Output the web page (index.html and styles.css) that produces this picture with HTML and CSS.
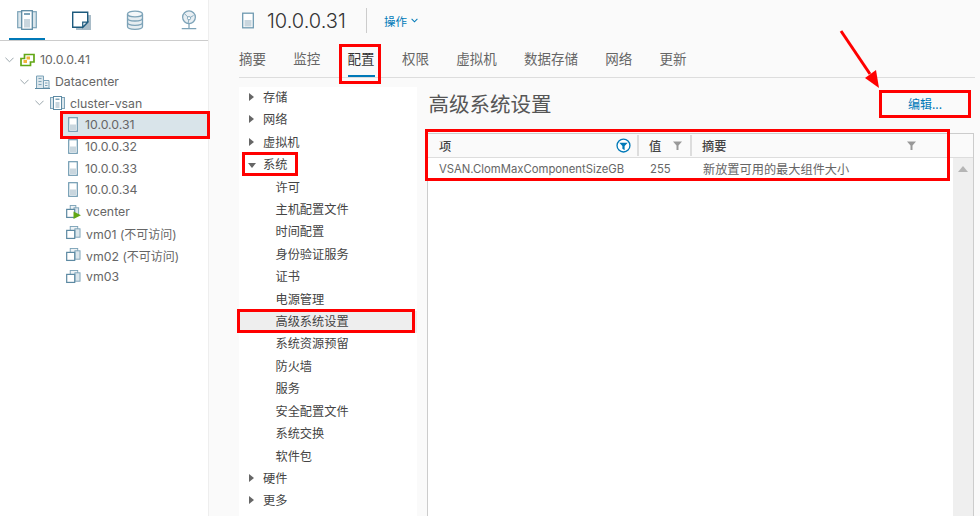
FILE: index.html
```html
<!DOCTYPE html>
<html lang="zh">
<head>
<meta charset="utf-8">
<title>高级系统设置</title>
<link rel="stylesheet" href="styles.css">
</head>
<body>
<div class="app">
  <aside class="sidebar">
    <nav class="side-tabs">
      <div class="side-tab active">
        <svg viewBox="0 0 20 20"><rect x=".7" y="1.700" width="5" height="16" fill="#dbe6ec" stroke="#7da3b8" stroke-width="1.200"/><rect x="14.300" y="1.700" width="5" height="16" fill="#dbe6ec" stroke="#7da3b8" stroke-width="1.200"/><rect x="4.700" y=".7" width="10.600" height="18.600" fill="#fff" stroke="#5d8aa3" stroke-width="1.300"/><rect x="7" y="3" width="6" height="2" fill="#7da3b8"/><rect x="7" y="9" width="6" height="8.500" fill="#c9d6de"/></svg>
      </div>
      <div class="side-tab">
        <svg viewBox="0 0 20 20"><path d="M5 5h15v15H5z" fill="#a9bcc8"/><path d="M1.700 2.200h15v10l-5 5h-10z" fill="#fff" stroke="#1d5a7d" stroke-width="1.400"/><path d="M16.700 12.200h-5v5z" fill="#dfe8ee" stroke="#1d5a7d" stroke-width="1.200"/></svg>
      </div>
      <div class="side-tab">
        <svg viewBox="0 0 20 20"><g fill="#e6edf1" stroke="#7da3b8" stroke-width="1.300"><path d="M2.500 4v12.500c0 1.600 3.400 2.800 7.500 2.800s7.500-1.200 7.500-2.800V4"/><ellipse cx="10" cy="4" rx="7.500" ry="2.900" fill="#f4f7f9"/><path d="M2.500 8.200c0 1.600 3.400 2.800 7.500 2.800s7.500-1.200 7.500-2.800M2.500 12.500c0 1.600 3.400 2.800 7.500 2.800s7.500-1.200 7.500-2.800" fill="none"/></g></svg>
      </div>
      <div class="side-tab">
        <svg viewBox="0 0 20 22"><circle cx="10" cy="8" r="7" fill="#e9eff3" stroke="#7da3b8" stroke-width="1.400"/><path d="M5 4l5 5 5-3M10 9l-1 6" fill="none" stroke="#7da3b8"/><circle cx="10" cy="9" r="1.800" fill="#fff" stroke="#7da3b8"/><path d="M10 15v5M2 20.500h16" stroke="#7da3b8" stroke-width="1.400"/></svg>
      </div>
    </nav>
    <ul class="tree">
      <li class="tree-row lvl0"><svg class="chev" viewBox="0 0 10 6"><path d="M.5.500l4.500 4.500L9.500.500" fill="none" stroke="#9aa5ab" stroke-width="1.100"/></svg>
        <svg class="ico" viewBox="0 0 15 13"><path d="M1 5h3.500V1H14v7.500h-3.500V12H1z" fill="#fff" stroke="#62a716" stroke-width="1.700"/><rect x="6.500" y="3" width="3.500" height="3" fill="#f2b33d"/><rect x="3.500" y="6.500" width="3.500" height="3" fill="#f2b33d"/></svg>
        <span>10.0.0.41</span></li>
      <li class="tree-row lvl1"><svg class="chev" viewBox="0 0 10 6"><path d="M.5.500l4.500 4.500L9.500.500" fill="none" stroke="#9aa5ab" stroke-width="1.100"/></svg>
        <svg class="ico" viewBox="0 0 15 14"><path d="M1.500 13V1h7v12" fill="#dbe6ec" stroke="#7da3b8"/><path d="M8.500 5.500h5.500V13H8.500z" fill="#eef3f6" stroke="#7da3b8"/><path d="M0 13.500h15" stroke="#5d8aa3"/><path d="M3.500 3.500h3M3.500 6.500h3M3.500 9.500h3M10 8h2.500M10 10.500h2.500" stroke="#7da3b8"/></svg>
        <span>Datacenter</span></li>
      <li class="tree-row lvl2"><svg class="chev" viewBox="0 0 10 6"><path d="M.5.500l4.500 4.500L9.500.500" fill="none" stroke="#9aa5ab" stroke-width="1.100"/></svg>
        <svg class="ico" viewBox="0 0 15 14"><rect x=".5" y="1.500" width="3.500" height="11" fill="#dbe6ec" stroke="#7da3b8"/><rect x="11" y="1.500" width="3.500" height="11" fill="#dbe6ec" stroke="#7da3b8"/><rect x="3.500" y=".5" width="8" height="13" fill="#fff" stroke="#5d8aa3"/><rect x="5.500" y="2.500" width="4" height="1.500" fill="#7da3b8"/><rect x="5.500" y="6" width="4" height="6" fill="#c9d6de"/></svg>
        <span>cluster-vsan</span></li>
      <li class="tree-row lvl3 selected"><svg class="ico host" viewBox="0 0 10 15"><rect x=".7" y=".7" width="8.600" height="13.600" fill="#fff" stroke="#6f9ab1" stroke-width="1.200"/><rect x="2" y="7.500" width="6" height="5.500" fill="#c9d6de"/></svg><span>10.0.0.31</span></li>
      <li class="tree-row lvl3"><svg class="ico host" viewBox="0 0 10 15"><rect x=".7" y=".7" width="8.600" height="13.600" fill="#fff" stroke="#6f9ab1" stroke-width="1.200"/><rect x="2" y="7.500" width="6" height="5.500" fill="#c9d6de"/></svg><span>10.0.0.32</span></li>
      <li class="tree-row lvl3"><svg class="ico host" viewBox="0 0 10 15"><rect x=".7" y=".7" width="8.600" height="13.600" fill="#fff" stroke="#6f9ab1" stroke-width="1.200"/><rect x="2" y="7.500" width="6" height="5.500" fill="#c9d6de"/></svg><span>10.0.0.33</span></li>
      <li class="tree-row lvl3"><svg class="ico host" viewBox="0 0 10 15"><rect x=".7" y=".7" width="8.600" height="13.600" fill="#fff" stroke="#6f9ab1" stroke-width="1.200"/><rect x="2" y="7.500" width="6" height="5.500" fill="#c9d6de"/></svg><span>10.0.0.34</span></li>
      <li class="tree-row lvl3 vm"><svg class="ico" viewBox="0 0 16 15"><rect x="4.500" y=".5" width="6" height="5" fill="#eef3f6" stroke="#7da3b8"/><rect x="8.500" y="3" width="5" height="8" fill="#dbe6ec" stroke="#7da3b8"/><rect x=".7" y="4.700" width="8.600" height="8.600" fill="#fff" stroke="#5d8aa3" stroke-width="1.300"/><path d="M8 7l8 4-8 4z" fill="#62a716"/></svg><span>vcenter</span></li>
      <li class="tree-row lvl3 vm"><svg class="ico" viewBox="0 0 16 15"><rect x="4.500" y=".5" width="8" height="5" fill="#eef3f6" stroke="#7da3b8"/><rect x="9.500" y="3" width="5.500" height="9" fill="#dbe6ec" stroke="#7da3b8"/><rect x=".7" y="4.700" width="8.600" height="8.600" fill="#fff" stroke="#5d8aa3" stroke-width="1.300"/></svg><span>vm01 <span class="cjk">(不可访问)</span></span></li>
      <li class="tree-row lvl3 vm"><svg class="ico" viewBox="0 0 16 15"><rect x="4.500" y=".5" width="8" height="5" fill="#eef3f6" stroke="#7da3b8"/><rect x="9.500" y="3" width="5.500" height="9" fill="#dbe6ec" stroke="#7da3b8"/><rect x=".7" y="4.700" width="8.600" height="8.600" fill="#fff" stroke="#5d8aa3" stroke-width="1.300"/></svg><span>vm02 <span class="cjk">(不可访问)</span></span></li>
      <li class="tree-row lvl3 vm"><svg class="ico" viewBox="0 0 16 15"><rect x="4.500" y=".5" width="8" height="5" fill="#eef3f6" stroke="#7da3b8"/><rect x="9.500" y="3" width="5.500" height="9" fill="#dbe6ec" stroke="#7da3b8"/><rect x=".7" y="4.700" width="8.600" height="8.600" fill="#fff" stroke="#5d8aa3" stroke-width="1.300"/></svg><span>vm03</span></li>
    </ul>
  </aside>
  <main class="main">
    <header class="head">
      <svg class="head-ico" viewBox="0 0 12 16"><rect x=".7" y=".7" width="10.600" height="14.600" fill="#fff" stroke="#6f9ab1" stroke-width="1.300"/><rect x="2.500" y="7.500" width="7" height="6.500" fill="#c9d6de"/></svg>
      <h1 class="head-title">10.0.0.31</h1>
      <span class="head-sep"></span>
      <span class="head-action">操作</span>
      <svg class="head-chev" viewBox="0 0 8 5"><path d="M.7.700l3.300 3.300L7.300.700" fill="none" stroke="#0079b8" stroke-width="1.200"/></svg>
    </header>
    <nav class="tabs">
      <span class="tab">摘要</span><span class="tab">监控</span><span class="tab active">配置</span><span class="tab">权限</span><span class="tab">虚拟机</span><span class="tab">数据存储</span><span class="tab">网络</span><span class="tab">更新</span>
    </nav>
    <div class="body">
      <ul class="menu">
        <li class="m-top closed">存储</li>
        <li class="m-top closed">网络</li>
        <li class="m-top closed">虚拟机</li>
        <li class="m-top open">系统</li>
        <li class="m-sub">许可</li>
        <li class="m-sub">主机配置文件</li>
        <li class="m-sub">时间配置</li>
        <li class="m-sub">身份验证服务</li>
        <li class="m-sub">证书</li>
        <li class="m-sub">电源管理</li>
        <li class="m-sub current">高级系统设置</li>
        <li class="m-sub">系统资源预留</li>
        <li class="m-sub">防火墙</li>
        <li class="m-sub">服务</li>
        <li class="m-sub">安全配置文件</li>
        <li class="m-sub">系统交换</li>
        <li class="m-sub">软件包</li>
        <li class="m-top closed">硬件</li>
        <li class="m-top closed">更多</li>
      </ul>
      <section class="panel">
        <div class="panel-head">
          <h2 class="panel-title">高级系统设置</h2>
          <button class="edit">编辑...</button>
        </div>
        <div class="grid">
          <div class="grid-head">
            <div class="col col-a"><span>项</span><svg class="filter-on" viewBox="0 0 16 16"><circle cx="8" cy="8" r="6.900" fill="#fff" stroke="#0079b8" stroke-width="1.400"/><path d="M3.500 5h9L9.200 8.500V13L6.800 11.500v-3z" fill="#0079b8"/></svg></div>
            <div class="col col-b"><span>值</span><svg class="filter" viewBox="0 0 9 9"><path d="M0 .5h9L5.500 4.500V9h-2V4.500z" fill="#999"/></svg></div>
            <div class="col col-c"><span>摘要</span><svg class="filter" viewBox="0 0 9 9"><path d="M0 .5h9L5.500 4.500V9h-2V4.500z" fill="#999"/></svg></div>
          </div>
          <div class="grid-body">
            <div class="rows">
              <div class="row">
                <div class="cell col-a">VSAN.ClomMaxComponentSizeGB</div>
                <div class="cell col-b">255</div>
                <div class="cell col-c cjk-cell">新放置可用的最大组件大小</div>
              </div>
            </div>
            <div class="scroll"><svg class="scroll-up" viewBox="0 0 10 6"><path d="M0 6L5 0l5 6z" fill="#b5b5b5"/></svg></div>
          </div>
        </div>
      </section>
    </div>
  </main>
</div>
<div class="mark mark-host"></div>
<div class="mark mark-tab"></div>
<div class="mark mark-edit"></div>
<div class="mark mark-grid"></div>
<div class="mark mark-sys"></div>
<div class="mark mark-adv"></div>
<svg class="arrow" viewBox="0 0 50 66"><path d="M3 3L32 46" stroke="#f00" stroke-width="3" fill="none"/><path d="M41 60L27 50 38 42z" fill="#f00"/></svg>
</body>
</html>
```
FILE: styles.css
```css
* { box-sizing: border-box; }
html, body { margin: 0; padding: 0; width: 980px; height: 516px; overflow: hidden; }
body { background: #fafafa; color: #565656; font-family: "Noto Sans CJK SC", "Noto Sans", sans-serif; position: relative; }
ul { list-style: none; margin: 0; padding: 0; }
h1, h2 { margin: 0; font-weight: 400; }
.app { display: flex; height: 516px; }

.sidebar { width: 209px; flex: none; background: #fff; border-right: 1px solid #eee; height: 516px; }
.side-tabs { display: flex; gap: 18px; height: 41px; padding-left: 9px; border-bottom: 1px solid #ccc; }
.side-tab { width: 36px; flex: none; height: 40px; display: flex; justify-content: center; padding-top: 10px; }
.side-tab svg { width: 20px; height: 20px; }
.side-tab.active { border-bottom: 2px solid #0079b8; }
.tree { padding-top: 8px; }
.tree-row { height: 21.700px; display: flex; align-items: center; font-size: 12.300px; color: #666; font-family: "Inter", "Noto Sans CJK SC", sans-serif; white-space: nowrap; }
.cjk { font-size: 12px; }
.tree-row.lvl0 { padding-left: 5px; }
.tree-row.lvl1 { padding-left: 20px; }
.tree-row.lvl2 { padding-left: 35px; }
.tree-row.lvl3 { padding-left: 68px; }
.tree-row.selected { background: #d9e4ea; margin-left: 62px; padding-left: 6px; }
.chev { width: 9px; height: 6px; margin-right: 6px; flex: none; }
.ico { width: 15px; height: 14px; flex: none; margin-right: 5px; }
.ico.host { width: 10px; height: 15px; margin-right: 7px; }
.vm .ico { width: 15px; margin-left: -2px; margin-right: 5px; }

.main { flex: 1; min-width: 0; padding-left: 30px; }
.head { height: 41px; display: flex; align-items: center; }
.head-ico { width: 12px; height: 17px; margin-left: 3px; margin-right: 13px; flex: none; }
.head-title { font-size: 20px; font-weight: 300; color: #333; font-family: "Inter", sans-serif; width: 99px; white-space: nowrap; }
.head-sep { width: 1px; height: 25px; background: #ccc; }
.head-action { margin-left: 17px; font-size: 11.500px; color: #0079b8; }
.head-chev { width: 7px; height: 5px; margin-left: 4px; }
.tabs { height: 37px; display: flex; gap: 27.300px; border-bottom: 1px solid #ddd; font-size: 13.500px; width: 736px; align-items: flex-end; }
.tab { height: 36px; line-height: 34px; color: #666; }
.tab.active { color: #333; border-bottom: 2px solid #0079b8; }
.body { display: flex; margin-top: 9px; height: 429px; }
.menu { width: 178px; flex: none; background: #fff; font-size: 12.200px; color: #444; }
.menu li { height: 22.420px; line-height: 21px; position: relative; white-space: nowrap; }
.m-top { padding-left: 24px; }
.m-sub { padding-left: 36.500px; }
.closed::before { content: ""; position: absolute; left: 10px; top: 6px; border-left: 5px solid #666; border-top: 4.500px solid transparent; border-bottom: 4.500px solid transparent; }
.open::before { content: ""; position: absolute; left: 9px; top: 8.500px; border-top: 5px solid #666; border-left: 4.500px solid transparent; border-right: 4.500px solid transparent; }
.current { background: #eee; }

.panel { flex: 1; min-width: 0; padding-left: 10px; padding-right: 6px; }
.panel-head { height: 46px; display: flex; justify-content: space-between; align-items: flex-start; padding-left: 1.500px; }
.panel-title { font-size: 20.500px; line-height: 33px; color: #565656; }
.edit { background: none; border: 0; padding: 0; margin: 1px 4px 0 0; width: 90px; height: 30px; font: inherit; font-size: 12px; color: #0079b8; }
.grid { border: 1px solid #ccc; border-bottom: 0; height: 383px; background: #fff; }
.grid-head { display: flex; height: 24px; background: #fafafa; border-bottom: 1px solid #ddd; font-size: 12.200px; color: #444; font-weight: 500; }
.grid-head .col { display: flex; align-items: center; justify-content: space-between; position: relative; }
.grid-head .col + .col::before { content: ""; position: absolute; left: 0; top: 1px; bottom: 1px; width: 2px; background: #ddd; }
.col-a { width: 209px; flex: none; }
.col-b { width: 53px; flex: none; }
.col-c { flex: 1; min-width: 0; }
.grid-head .col-a { padding: 0 6px 0 11px; }
.grid-head .col-b { padding: 0 8px 0 12px; }
.grid-head .col-c { padding: 0 57px 0 12px; }
.filter-on { width: 15px; height: 15px; }
.filter { width: 9px; height: 9px; }
.grid-body { display: flex; height: 358px; }
.rows { flex: 1; min-width: 0; }
.row { display: flex; height: 21px; font-family: "Inter", "Noto Sans CJK SC", sans-serif; font-size: 11.300px; align-items: center; color: #666; }
.cell { padding-left: 13px; white-space: nowrap; }
.cell.col-a { padding-left: 11px; }
.cjk-cell { font-size: 12.200px; }
.scroll { width: 20px; flex: none; background: #efefef; }
.scroll-up { width: 10px; height: 6px; display: block; margin: 8px auto 0; }

.mark { position: absolute; border: 3px solid #f00; pointer-events: none; }
.mark-host { left: 60px; top: 111px; width: 150px; height: 28px; }
.mark-tab { left: 339px; top: 44px; width: 42px; height: 40px; }
.mark-edit { left: 879px; top: 90px; width: 92px; height: 28px; }
.mark-grid { left: 425px; top: 129px; width: 525px; height: 52px; }
.mark-sys { left: 242px; top: 152px; width: 56px; height: 24px; }
.mark-adv { left: 237px; top: 309px; width: 178px; height: 24px; }
.arrow { position: absolute; left: 838px; top: 28px; width: 50px; height: 66px; }
```
